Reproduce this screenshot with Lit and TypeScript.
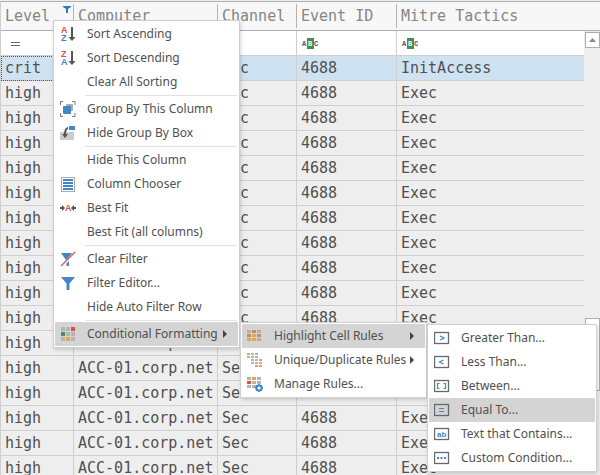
import { LitElement, html, svg, css, nothing, TemplateResult } from "lit";
import { customElement, property } from "lit/decorators.js";
import { classMap } from "lit/directives/class-map.js";

type Item = { label: string; icon?: string; sub?: boolean; active?: boolean } | "-";

const BLUE = "#3f87c9";
const GRAY = "#b4b4b4";
const ORANGE = "#f0a04b";
const RED = "#dc5046";
const DARK = "#555";

const box = (inner: unknown) => svg`
  <rect x="0.500" y="2.500" width="14" height="11" fill="none" stroke="#686868" stroke-width="1.300"/>${inner}`;

const cells = (w: number, h: number, px: number, py: number, rows: string[], oy = 0, ox = 0) => {
  const tint: Record<string, string> = { g: GRAY, d: "#999", o: ORANGE, r: RED, n: "#4b8f50" };
  return rows.map((r, y) =>
    [...r].map((c, x) =>
      c === " " ? nothing : svg`<rect x=${ox + x * px} y=${oy + y * py} width=${w} height=${h} fill=${tint[c]}/>`));
};

const arrowDown = svg`<path d="M11 1h2v10h2.500L12 15 8.500 11H11z" fill=${DARK}/>`;

const ICONS: Record<string, TemplateResult | unknown> = {
  asc: svg`<text class="az" x="1" y="7" fill=${RED}>A</text><text class="az" x="1" y="15" fill=${BLUE}>Z</text>${arrowDown}`,
  desc: svg`<text class="az" x="1" y="7" fill=${RED}>Z</text><text class="az" x="1" y="15" fill=${BLUE}>A</text>${arrowDown}`,
  group: svg`
    <path d="M3 .5H.5V4M12 .5h3V4M.5 12v3.500H3M12 15.500h3V12" fill="none" stroke="#777"/>
    <rect x="6" y="3" width="7" height="7" rx="1" fill="#aaa"/>
    <rect x="3" y="5" width="8" height="8" rx="1" fill=${BLUE}/>`,
  hidebox: svg`
    <path d="M0 7h14v8H0z" fill="#cbcbcb"/><path d="M8 0h7v5H8z" fill="#fff"/><path d="M9 1h6v4H9z" fill=${BLUE}/>
    <path d="M8 2v2q-2 1-2 5h2l-3 4-3-4h2q0-6 4-7z" fill=${DARK}/>`,
  chooser: svg`
    <rect x="1.500" y="1.500" width="13" height="14" fill="#fff" stroke="#aaa"/>
    <path d="M3 3h10v2H3zM3 6h10v2H3zM3 9h10v2H3zM3 12h10v2H3z" fill=${BLUE}/>`,
  fit: svg`
    <path d="M0 7h2V5l3 3-3 3V9H0zM16 7h-2V5l-3 3 3 3V9h2z" fill=${DARK}/>
    <text class="az" x="5" y="11" fill=${RED}>A</text>`,
  clear: svg`
    <path d="M1 2h11L8 7v1l-2 1zM6 13l3-3v5H7z" fill=${BLUE}/>
    <path d="M1 15L15 1" stroke="#e0695f" stroke-width="1.600"/>`,
  filter: svg`<path d="M1 2h14L9.500 8.500V15h-3V8.500z" fill=${BLUE}/>`,
  cond: cells(4, 4, 5, 5, ["ggr", "ngg", "gog"], 1, 1),
  highlight: cells(4, 3, 5, 4, ["odo", "dod", "ooo"], 2),
  unique: cells(3, 2, 4, 3, ["ogg ", "ggg ", " ggo", " ggg", "  oo"], 1),
  manage: svg`
    ${cells(4, 3, 5, 4, ["gog", "rgg", "gg "], 1)}
    <circle cx="12" cy="12" r="2.600" fill="none" stroke=${BLUE} stroke-width="2"/>
    <path d="M12 8v1.500M12 14.500V16M8 12h1.500M14.500 12H16M9.200 9.200l1 1M13.800 13.800l1 1M9.200 14.800l1-1M13.800 10.200l1-1" stroke=${BLUE} stroke-width="1.500"/>`,
  gt: box(svg`<path d="M6 6l4 2-4 2" fill="none" stroke=${BLUE} stroke-width="1.300"/>`),
  lt: box(svg`<path d="M9.500 6l-4 2 4 2" fill="none" stroke=${BLUE} stroke-width="1.300"/>`),
  between: box(svg`<path d="M5.500 5.500h-2v5h2M9.500 5.500h2v5h-2" fill="none" stroke=${BLUE} stroke-width="1.200"/>`),
  eq: box(svg`<path d="M5 6.500h5M5 9.500h5" stroke=${BLUE}/>`),
  ab: box(svg`<text class="ab" x="3" y="11" fill=${BLUE}>ab</text>`),
  dots: box(svg`<path d="M3 7h2v2H3zM6.500 7h2v2h-2zM10 7h2v2h-2z" fill=${BLUE}/>`),
};

@customElement("popup-menu")
class PopupMenu extends LitElement {
  @property({ attribute: false }) items: Item[] = [];

  static styles = css`
    :host {
      display: block;
      box-sizing: border-box;
      padding: 1px;
      border: 1px solid #d0d0d0;
      background: #fff;
      box-shadow: 1px 2px 4px rgba(0, 0, 0, 0.16);
    }
    .item {
      display: flex;
      align-items: center;
      box-sizing: border-box;
      width: 100%;
      height: 24px;
      margin: 0;
      padding: 0 11px 0 5px;
      border: 0;
      background: none;
      color: #505050;
      font: 12px/16px "Noto Sans", "Open Sans", sans-serif;
      text-align: left;
      white-space: nowrap;
    }
    .item:hover,
    .active {
      background: #d4d4d4;
    }
    .icon {
      flex: none;
      width: 16px;
      height: 16px;
      margin-right: 11px;
    }
    .label {
      flex: 1;
      min-width: 0;
    }
    .more {
      flex: none;
      width: 4px;
      height: 8px;
      fill: #444;
    }
    .sep {
      height: 1px;
      margin: 1px 1px 1px 30px;
      border: 0;
      background: #e2e2e2;
    }
    .az {
      font: bold 9px "Liberation Sans", sans-serif;
    }
    .ab {
      font: bold 8px "Liberation Sans", sans-serif;
    }
  `;

  render() {
    return this.items.map((it) =>
      it === "-"
        ? html`<hr class="sep" />`
        : html`<button class=${classMap({ item: true, active: !!it.active })} role="menuitem">
            <svg class="icon" viewBox="0 0 16 16" aria-hidden="true">${it.icon ? ICONS[it.icon] : nothing}</svg>
            <span class="label">${it.label}</span>
            ${it.sub ? html`<svg class="more" viewBox="0 0 4 8"><path d="M0 0l4 4-4 4z" /></svg>` : nothing}
          </button>`);
  }
}

const MAIN: Item[] = [
  { label: "Sort Ascending", icon: "asc" },
  { label: "Sort Descending", icon: "desc" },
  { label: "Clear All Sorting" },
  "-",
  { label: "Group By This Column", icon: "group" },
  { label: "Hide Group By Box", icon: "hidebox" },
  "-",
  { label: "Hide This Column" },
  { label: "Column Chooser", icon: "chooser" },
  { label: "Best Fit", icon: "fit" },
  { label: "Best Fit (all columns)" },
  "-",
  { label: "Clear Filter", icon: "clear" },
  { label: "Filter Editor...", icon: "filter" },
  { label: "Hide Auto Filter Row" },
  "-",
  { label: "Conditional Formatting", icon: "cond", sub: true, active: true },
];

const FORMATTING: Item[] = [
  { label: "Highlight Cell Rules", icon: "highlight", sub: true, active: true },
  { label: "Unique/Duplicate Rules", icon: "unique", sub: true },
  { label: "Manage Rules...", icon: "manage" },
];

const RULES: Item[] = [
  { label: "Greater Than...", icon: "gt" },
  { label: "Less Than...", icon: "lt" },
  { label: "Between...", icon: "between" },
  { label: "Equal To...", icon: "eq", active: true },
  { label: "Text that Contains...", icon: "ab" },
  { label: "Custom Condition...", icon: "dots" },
];

const COLUMNS = ["Level", "Computer", "Channel", "Event ID", "Mitre Tactics"];
const ROWS = Array.from({ length: 17 }, (_, i) => [
  i ? "high" : "crit", "ACC-01.corp.net", "Sec", "4688", i ? "Exec" : "InitAccess",
]);

@customElement("app-root")
class AppRoot extends LitElement {
  static styles = css`
    :host {
      display: flex;
      position: relative;
      box-sizing: border-box;
      height: 100vh;
      padding-top: 1px;
      overflow: hidden;
      background: #eee;
      color: #505050;
      font: 15px/20px "DejaVu Sans Mono", "Liberation Mono", monospace;
    }
    .view {
      flex: 1;
      min-width: 0;
    }
    .grid {
      width: 100%;
      table-layout: fixed;
      border-collapse: separate;
      border-spacing: 0;
      border-left: 1px solid #cfcfcf;
    }
    .level { width: 73px; }
    .computer { width: 144px; }
    .channel { width: 79px; }
    .event { width: 100px; }
    th,
    td {
      box-sizing: border-box;
      height: 25px;
      padding: 0 0 0 4px;
      border-right: 1px solid #cfcfcf;
      border-bottom: 1px solid #cfcfcf;
      text-align: left;
      white-space: nowrap;
    }
    th:last-child,
    td:last-child {
      border-right: 0;
    }
    th {
      height: 30px;
      padding: 2px 0;
      border-right: 0;
      border-top: 1px solid #b0b0b0;
      border-bottom-color: #b0b0b0;
      background: #f7f7f7;
      color: #858585;
      font-weight: normal;
    }
    .head {
      display: flex;
      height: 24px;
      align-items: center;
      padding-left: 4px;
      border-right: 1px solid #b0b0b0;
    }
    th:last-child .head {
      border-right: 0;
    }
    .funnel {
      align-self: flex-start;
      width: 8px;
      height: 8px;
      margin: 1px 2px 0 auto;
      fill: #3577bd;
    }
    .filters td {
      background: #fff;
    }
    .filter {
      display: flex;
      align-items: center;
      padding-left: 1px;
    }
    .op {
      flex: none;
      width: 17px;
      height: 12px;
    }
    .query {
      flex: 1;
      min-width: 0;
      height: 20px;
      padding: 0;
      border: 0;
      outline: 0;
      background: none;
      font: inherit;
    }
    .abc {
      font: bold 7px "Liberation Mono", monospace;
      fill: #555;
    }
    .abc-mid {
      fill: #fff;
    }
    .current td {
      background: #cfe2f2;
    }
    .focus {
      outline: 1px dotted #555;
      outline-offset: -1px;
    }
    .scroll {
      display: flex;
      flex-direction: column;
      flex: none;
      width: 16px;
    }
    .cap {
      box-sizing: border-box;
      height: 30px;
      border-top: 1px solid #b0b0b0;
      border-bottom: 1px solid #b0b0b0;
      background: #f7f7f7;
    }
    .up,
    .thumb {
      box-sizing: border-box;
      width: 15px;
      margin: 1px 0 0 1px;
      padding: 0;
      border: 1px solid #adadad;
      background: #fff;
    }
    .up {
      display: flex;
      align-items: center;
      justify-content: center;
      height: 16px;
    }
    .up svg {
      width: 7px;
      height: 4px;
      fill: #888;
    }
    .before { flex: 270; }
    .thumb { flex: 72; }
    .after { flex: 84; }
    .main,
    .formatting,
    .rules {
      position: absolute;
    }
    .main { left: 53px; top: 20px; width: 187px; }
    .formatting { left: 240px; top: 322px; width: 187px; }
    .rules { left: 427px; top: 324px; width: 170px; }
  `;

  private operator(i: number) {
    return i === 0
      ? html`<svg class="op" viewBox="0 0 17 12"><path d="M5 5.500h9M5 8.500h9" stroke="#666" /></svg>`
      : html`<svg class="op" viewBox="0 0 17 12">
          <rect x="5" y="1" width="7" height="11" fill="#43904b" />
          <text class="abc" x="0" y="9">A</text>
          <text class="abc abc-mid" x="6" y="9">B</text>
          <text class="abc" x="12" y="9">C</text>
        </svg>`;
  }

  render() {
    return html`
      <div class="view">
        <table class="grid">
          <colgroup>
            <col class="level" /><col class="computer" /><col class="channel" /><col class="event" /><col />
          </colgroup>
          <thead>
            <tr>
              ${COLUMNS.map((c, i) => html`<th scope="col"><div class="head">${c}${i === 0
                ? html`<svg class="funnel" viewBox="0 0 8 8"><path d="M0 1h8v1L5 4v4H3V4L0 2z" /></svg>`
                : nothing}</div></th>`)}
            </tr>
          </thead>
          <tbody>
            <tr class="filters">
              ${COLUMNS.map((c, i) => html`<td><div class="filter">${this.operator(i)}<input class="query" aria-label="Filter ${c}" /></div></td>`)}
            </tr>
            ${ROWS.map((r, y) => html`<tr class=${classMap({ current: y === 0 })}>
              ${r.map((v, x) => html`<td class=${classMap({ focus: x === 0 && y === 0 })}>${v}</td>`)}
            </tr>`)}
          </tbody>
        </table>
      </div>
      <div class="scroll">
        <div class="cap"></div>
        <button class="up" aria-label="Scroll up"><svg viewBox="0 0 7 4"><path d="M0 4l3.500-4L7 4z" /></svg></button>
        <div class="before"></div>
        <div class="thumb"></div>
        <div class="after"></div>
      </div>
      <popup-menu class="main" role="menu" .items=${MAIN}></popup-menu>
      <popup-menu class="formatting" role="menu" .items=${FORMATTING}></popup-menu>
      <popup-menu class="rules" role="menu" .items=${RULES}></popup-menu>
    `;
  }
}
